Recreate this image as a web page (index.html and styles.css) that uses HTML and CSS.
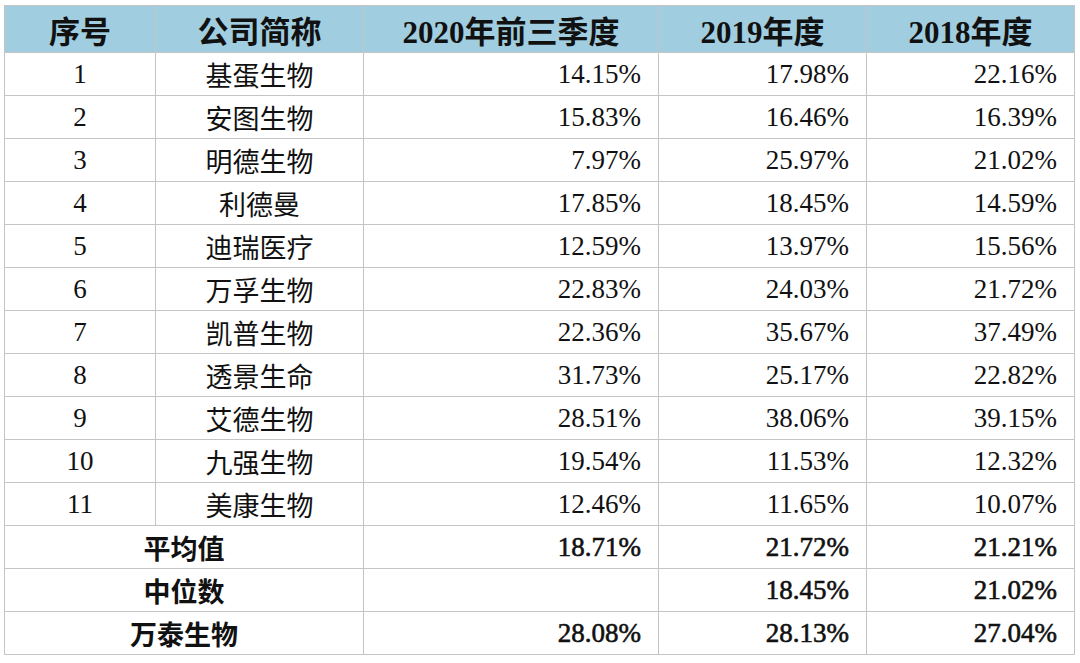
FILE: index.html
```html
<!DOCTYPE html>
<html lang="zh">
<head>
<meta charset="utf-8">
<link rel="stylesheet" href="styles.css">
</head>
<body>
<table class="tbl">
  <colgroup>
    <col class="c1"><col class="c2"><col class="c3"><col class="c4"><col class="c5">
  </colgroup>
  <thead>
    <tr class="head">
      <th>序号</th><th>公司简称</th><th>2020年前三季度</th><th>2019年度</th><th>2018年度</th>
    </tr>
  </thead>
  <tbody>
    <tr><td class="idx">1</td><td class="name">基蛋生物</td><td class="num">14.15%</td><td class="num">17.98%</td><td class="num">22.16%</td></tr>
    <tr><td class="idx">2</td><td class="name">安图生物</td><td class="num">15.83%</td><td class="num">16.46%</td><td class="num">16.39%</td></tr>
    <tr><td class="idx">3</td><td class="name">明德生物</td><td class="num">7.97%</td><td class="num">25.97%</td><td class="num">21.02%</td></tr>
    <tr><td class="idx">4</td><td class="name">利德曼</td><td class="num">17.85%</td><td class="num">18.45%</td><td class="num">14.59%</td></tr>
    <tr><td class="idx">5</td><td class="name">迪瑞医疗</td><td class="num">12.59%</td><td class="num">13.97%</td><td class="num">15.56%</td></tr>
    <tr><td class="idx">6</td><td class="name">万孚生物</td><td class="num">22.83%</td><td class="num">24.03%</td><td class="num">21.72%</td></tr>
    <tr><td class="idx">7</td><td class="name">凯普生物</td><td class="num">22.36%</td><td class="num">35.67%</td><td class="num">37.49%</td></tr>
    <tr><td class="idx">8</td><td class="name">透景生命</td><td class="num">31.73%</td><td class="num">25.17%</td><td class="num">22.82%</td></tr>
    <tr><td class="idx">9</td><td class="name">艾德生物</td><td class="num">28.51%</td><td class="num">38.06%</td><td class="num">39.15%</td></tr>
    <tr><td class="idx">10</td><td class="name">九强生物</td><td class="num">19.54%</td><td class="num">11.53%</td><td class="num">12.32%</td></tr>
    <tr><td class="idx">11</td><td class="name">美康生物</td><td class="num">12.46%</td><td class="num">11.65%</td><td class="num">10.07%</td></tr>
    <tr class="sum"><td class="label" colspan="2">平均值</td><td class="num">18.71%</td><td class="num">21.72%</td><td class="num">21.21%</td></tr>
    <tr class="sum"><td class="label" colspan="2">中位数</td><td class="num"></td><td class="num">18.45%</td><td class="num">21.02%</td></tr>
    <tr class="sum"><td class="label" colspan="2">万泰生物</td><td class="num">28.08%</td><td class="num">28.13%</td><td class="num">27.04%</td></tr>
  </tbody>
</table>
</body>
</html>
```
FILE: styles.css
```css
html, body {
  margin: 0;
  padding: 0;
  background: #ffffff;
}
body {
  padding: 5px 0 0 4px;
  font-family: "Liberation Serif", "Noto Sans CJK SC", serif;
  color: #111111;
}
.tbl {
  border-collapse: collapse;
  table-layout: fixed;
  width: 1070px;
}
.c1 { width: 151px; }
.c2 { width: 208px; }
.c3 { width: 295px; }
.c4 { width: 208px; }
.c5 { width: 208px; }
.tbl th, .tbl td {
  border: 1px solid #c4c4c4;
  padding: 0;
  vertical-align: middle;
  white-space: nowrap;
}
.head th {
  height: 46px;
  background: #a0cde0;
  font-size: 31px;
  font-weight: bold;
  text-align: center;
  font-family: "Liberation Serif", "Noto Sans CJK SC", serif;
}
.tbl td {
  height: 42px;
  font-size: 27px;
}
.idx { text-align: center; }
.name {
  text-align: center;
  font-family: "Noto Sans CJK SC", sans-serif;
  font-size: 27px;
}
.num {
  text-align: right;
  padding-right: 17px !important;
}
.sum .num {
  -webkit-text-stroke: 0.6px #111111;
}
.sum .label {
  font-weight: bold;
}
.label {
  text-align: center;
  font-family: "Noto Sans CJK SC", sans-serif;
}
```
